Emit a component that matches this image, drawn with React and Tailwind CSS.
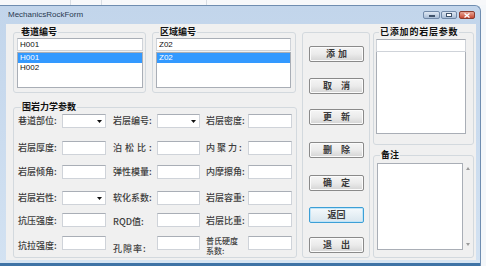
import React from 'react';

const rows = [
  { mt: 'mt-[1px]', cells: [['巷道部位:', 'combo'], ['岩层编号:', 'combo'], ['岩层密度:', 'text']] },
  { mt: 'mt-[13px]', cells: [['岩层厚度:', 'text'], ['泊松比:', 'text', 'tracking-[3px]'], ['内聚力:', 'text', 'tracking-[2px]']] },
  { mt: 'mt-[10px]', cells: [['岩层倾角:', 'text'], ['弹性模量:', 'text'], ['内摩擦角:', 'text']] },
  { mt: 'mt-[12px]', cells: [['岩层岩性:', 'combo'], ['软化系数:', 'text'], ['岩层容重:', 'text']] },
  { mt: 'mt-[8px]', cells: [['抗压强度:', 'text'], ['RQD值:', 'text', 'pt-[3px]'], ['岩层比重:', 'text']] },
  { mt: 'mt-[9px]', cells: [['抗拉强度:', 'text'], ['孔隙率:', 'text', 'pt-[5px] tracking-[1px]'], ['普氏硬度系数:', 'text']] },
];

const buttons = [
  { label: '添加', mt: 'mt-[13px]', cls: 'tracking-[3px] pl-[3px]' },
  { label: '取　消', mt: 'mt-[16px]' },
  { label: '更　新', mt: 'mt-[15px]' },
  { label: '删　除', mt: 'mt-[17px]' },
  { label: '确　定', mt: 'mt-[17px]' },
  { label: '返回', mt: 'mt-[16px]', focus: true },
  { label: '退　出', mt: 'mt-[14px]' },
];

function Group({ title, className = '', children }) {
  return (
    <fieldset className={`border border-[#d3d9de] rounded-[3px] min-w-0 ${className}`}>
      {title && (
        <legend className="ml-[3px] px-[1px] text-[9px] leading-[12px] font-bold text-[#111]">{title}</legend>
      )}
      {children}
    </fieldset>
  );
}

function TextBox({ className = '', children }) {
  return (
    <div className={`bg-white border border-[#cfd3d9] border-t-[#a9aeb6] ${className}`}>{children}</div>
  );
}

function Combo() {
  return (
    <TextBox className="h-[14px] flex items-center justify-end pr-[3px]">
      <svg width="5" height="3" viewBox="0 0 5 3">
        <path d="M0 0H5L2.5 3Z" fill="#111" />
      </svg>
    </TextBox>
  );
}

function ListBox({ className = '', items, selected }) {
  return (
    <div className={`bg-white border border-[#a9aeb6] font-['Liberation_Sans',sans-serif] text-[8px] leading-[10px] ${className}`}>
      {items.map((it, i) => (
        <div key={it} className={`pl-[2px] h-[10px] ${i === selected ? 'bg-[#3399ff] text-white' : 'text-[#111]'}`}>{it}</div>
      ))}
    </div>
  );
}

function Btn({ label, mt, cls = '', focus }) {
  return (
    <div
      className={`${mt} ml-[6px] w-[55px] h-[16px] rounded-[2px] border flex items-center justify-center whitespace-pre text-[9px] font-bold text-[#3a3a3a] ${
        focus
          ? 'border-[#3c9fd6] bg-linear-to-b from-[#f4f9fc] to-[#d9e6ee] shadow-[inset_0_0_0_1px_#bfe4f8]'
          : 'border-[#8a8a8a] bg-linear-to-b from-[#f5f5f5] via-[#ebebeb] to-[#d4d4d4] shadow-[inset_0_0_0_1px_#fbfbfb]'
      } ${cls}`}
    >
      {label}
    </div>
  );
}

export default function App() {
  return (
    <div className="w-[486px] h-[266px] overflow-hidden bg-[#f4f7fa] font-['Noto_Sans_CJK_SC',sans-serif] text-[#222]">
      <div className="h-[5px] bg-[#f7f8fa] flex">
        <div className="w-[70px]" />
        <div className="w-[1px] bg-[#d8dde3]" />
        <div className="w-[30px]" />
        <div className="w-[1px] bg-[#d8dde3]" />
        <div className="w-[104px]" />
        <div className="w-[1px] bg-[#d8dde3]" />
      </div>
      <div className="w-[481px] h-[261px] flex flex-col rounded-tr-[6px] border-t border-r border-[#6f8db0] bg-linear-to-b from-[#c2d5eb] to-[#d3e2f2]">
        {/* title bar */}
        <div className="h-[18px] flex items-start pl-[8px] pr-[5px]">
          <span className="mt-[4px] text-[8px] leading-[10px] font-['Liberation_Sans',sans-serif] text-[#2a3a50]">MechanicsRockForm</span>
          <div className="ml-auto mt-[5px] flex">
            <div className="w-[17px] h-[8px] rounded-[2px] border border-[#7189a8] bg-linear-to-b from-[#dfe8f3] to-[#a9bdd6] flex items-end justify-center pb-[1px]">
              <div className="w-[6px] h-[2px] bg-white border border-[#40536b]" />
            </div>
            <div className="ml-[1px] w-[16px] h-[8px] rounded-[2px] border border-[#7189a8] bg-linear-to-b from-[#dfe8f3] to-[#a9bdd6] flex items-center justify-center">
              <div className="w-[6px] h-[4px] border border-[#40536b] bg-white" />
            </div>
            <div className="ml-[2px] w-[16px] h-[8px] rounded-[2px] border border-[#8c3b2e] bg-linear-to-b from-[#e7a596] to-[#c6452f] flex items-center justify-center">
              <svg width="6" height="5" viewBox="0 0 6 5">
                <path d="M0.5 0.5L5.5 4.5M5.5 0.5L0.5 4.5" stroke="#fff" strokeWidth="1.4" />
              </svg>
            </div>
          </div>
        </div>

        {/* client area */}
        <div className="ml-[6px] mr-[4px] h-[236px] bg-[#f0f0f0] flex items-start">
          {/* left column */}
          <div className="ml-[7px] w-[284px] flex flex-col">
            <div className="mt-[2px] flex">
              <Group title="巷道编号" className="w-[133px] h-[67px] pl-[3px]">
                <TextBox className="w-[126px] h-[13px] font-['Liberation_Sans',sans-serif] text-[8px] leading-[11px] pl-[2px] text-[#111]">H001</TextBox>
                <ListBox className="mt-[1px] w-[126px] h-[36px]" items={['H001', 'H002']} selected={0} />
              </Group>
              <Group title="区域编号" className="ml-[6px] w-[144px] h-[67px] pl-[3px]">
                <TextBox className="w-[135px] h-[13px] font-['Liberation_Sans',sans-serif] text-[8px] leading-[11px] pl-[2px] text-[#111]">Z02</TextBox>
                <ListBox className="mt-[1px] w-[135px] h-[36px]" items={['Z02']} selected={0} />
              </Group>
            </div>

            <Group title="围岩力学参数" className="mt-[8px] h-[157px] pl-[4px]">
              {rows.map((r, ri) => (
                <div key={ri} className={`${r.mt} grid grid-cols-[44px_44px_51px_43px_48px_44px] h-[14px]`}>
                  {r.cells.map(([label, kind, extra = ''], ci) => (
                    <React.Fragment key={ci}>
                      {label === '普氏硬度系数:' ? (
                        <div className="pl-[6px] text-[8px] leading-[10px] font-medium text-[#3c3c3c] whitespace-nowrap">
                          普氏硬度<br />系数:
                        </div>
                      ) : (
                        <div
                          className={`${ci === 0 ? '' : ci === 1 ? 'pl-[7px]' : 'pl-[6px]'} flex items-center text-[9px] leading-[12px] font-medium text-[#3c3c3c] whitespace-nowrap ${extra}`}
                        >
                          {label}
                        </div>
                      )}
                      {kind === 'combo' ? <Combo /> : <TextBox className="h-[14px]" />}
                    </React.Fragment>
                  ))}
                </div>
              ))}
            </Group>
          </div>

          {/* button column */}
          <fieldset className="ml-[5px] mt-[8px] w-[68px] h-[226px] border border-[#d3d9de] rounded-[3px] flex flex-col">
            {buttons.map((b) => (
              <Btn key={b.label} {...b} />
            ))}
          </fieldset>

          {/* right column */}
          <div className="ml-[3px] w-[101px] flex flex-col">
            <Group title="已添加的岩层参数" className="mt-[2px] h-[119px] pl-[2px] [&>legend]:tracking-[0.8px]">
              <TextBox className="mt-[1px] w-[90px] h-[13px]" />
              <div className="w-[90px] h-[82px] bg-white border border-[#a9aeb6] border-t-0" />
            </Group>
            <Group title="备注" className="mt-[4px] h-[109px] pl-[3px]">
              <div className="mt-[2px] flex">
                <div className="w-[86px] h-[87px] bg-white border border-[#a9aeb6]" />
                <div className="w-[9px] h-[87px] flex flex-col items-center justify-between py-[4px]">
                  <svg width="4" height="3" viewBox="0 0 4 3"><path d="M0 3H4L2 0Z" fill="#9a9a9a" /></svg>
                  <svg width="4" height="3" viewBox="0 0 4 3"><path d="M0 0H4L2 3Z" fill="#9a9a9a" /></svg>
                </div>
              </div>
            </Group>
          </div>
        </div>

        {/* bottom frame */}
        <div className="h-[6px] flex flex-col">
          <div className="h-[3px] bg-[#d6e4f2]" />
          <div className="h-[3px] bg-[#3f73a6]" />
        </div>
      </div>
    </div>
  );
}
